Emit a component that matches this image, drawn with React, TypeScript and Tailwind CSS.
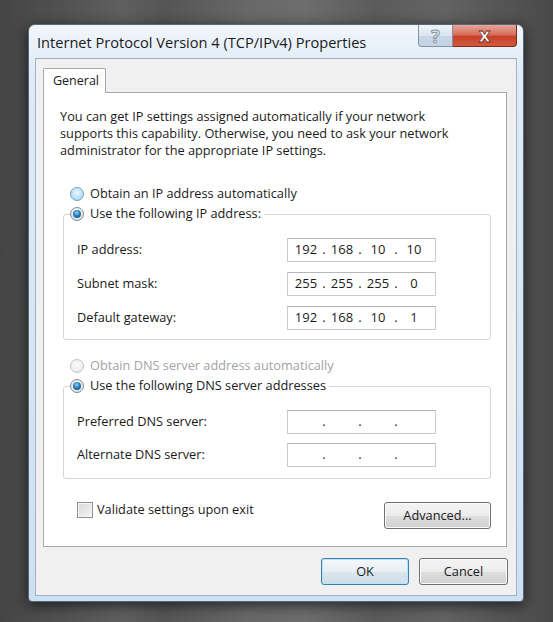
import React from "react";

const FONT = { fontFamily: '"Open Sans", "Noto Sans", "Liberation Sans", sans-serif' };

function Radio({ kind }: { kind: "off" | "on" | "disabled" }) {
  if (kind === "on") {
    return (
      <span className="w-[14px] h-[14px] rounded-full border border-[#7f8a94] bg-[radial-gradient(circle_at_50%_40%,#ffffff,#d9dde1)] flex items-center justify-center shrink-0">
        <span className="w-[8px] h-[8px] rounded-full bg-[radial-gradient(circle_at_45%_35%,#8fd3f5_0%,#2a7fb8_45%,#0d3f6b_100%)]" />
      </span>
    );
  }
  if (kind === "disabled") {
    return (
      <span className="w-[14px] h-[14px] rounded-full border border-[#c4c4c4] bg-[radial-gradient(circle_at_50%_40%,#fbfbfb,#e6e6e6)] shrink-0" />
    );
  }
  return (
    <span className="w-[14px] h-[14px] rounded-full border border-[#7e9bb3] bg-[radial-gradient(circle_at_50%_40%,#e9f6fd_0%,#b7e0f6_60%,#9fd2ef_100%)] shrink-0" />
  );
}

function IpBox({ parts }: { parts: string[] }) {
  return (
    <div className="w-[149px] h-[24px] border border-[#c9cbd0] border-t-[#b4b7bd] bg-white flex items-center pl-[3px] text-[13px] text-[#1a1a1a]">
      {parts.map((p, i) => (
        <React.Fragment key={i}>
          <span className="w-[30px] text-center">{p}</span>
          {i < 3 && <span className="w-[6px] text-center">.</span>}
        </React.Fragment>
      ))}
    </div>
  );
}

function Row({ label, parts }: { label: string; parts: string[] }) {
  return (
    <div className="flex items-center h-[24px]">
      <span className="w-[210px] text-[12.75px] text-[#1a1a1a]">{label}</span>
      <IpBox parts={parts} />
    </div>
  );
}

const btn =
  "h-[27px] rounded-[3px] border border-[#707070] bg-[linear-gradient(to_bottom,#f4f4f4_0%,#ececec_50%,#dedede_51%,#d0d0d0_100%)] shadow-[inset_0_0_0_1px_#fcfcfc] text-[12.75px] text-[#1a1a1a] flex items-center justify-center";

export default function App() {
  return (
    <div
      className="w-[553px] h-[622px] overflow-hidden pl-[28px] pt-[24px] bg-[linear-gradient(to_right,#444444_0%,#525252_12%,#5f5f5f_22%,#555555_30%,#686868_45%,#6d6d6d_55%,#5b5b5b_68%,#636363_80%,#494949_100%)]"
      style={FONT}
    >
      <div className="w-[496px] h-[578px] rounded-t-[7px] rounded-b-[4px] border border-[#55677a] bg-[linear-gradient(to_bottom,#f1f6fb_0%,#e0ebf6_8%,#d6e5f4_60%,#cde0f2_100%)] shadow-[0_3px_14px_rgba(0,0,0,0.65)] flex flex-col px-[6px] pb-[5px]">
        <div className="h-[33px] flex items-start justify-between">
          <span className="pt-[7px] pl-[2px] text-[14.6px] leading-[20px] text-[#1a1a1a]">
            Internet Protocol Version 4 (TCP/IPv4) Properties
          </span>
          <div className="flex h-[22px]">
            <div className="w-[35px] h-full rounded-bl-[4px] border border-t-0 border-[#7f93a8] bg-[linear-gradient(to_bottom,#eef3f8_0%,#dbe5ef_50%,#c8d6e4_51%,#c4d4e4_100%)] flex items-center justify-center">
              <span className="text-[18px] font-bold leading-none text-[#e8eef4] [-webkit-text-stroke:1px_#8492a0]">?</span>
            </div>
            <div className="w-[64px] h-full rounded-br-[4px] border border-l-0 border-t-0 border-[#7a2a1e] bg-[linear-gradient(to_bottom,#e7a597_0%,#d9705e_45%,#c7412b_55%,#d25a3c_100%)] flex items-center justify-center">
              <span className="text-[16px] font-extrabold leading-none text-white [-webkit-text-stroke:0.8px_#7a2a1e]">X</span>
            </div>
          </div>
        </div>

        <div className="flex-1 bg-[#f0f0f0] border border-[#9fb3c8] flex flex-col pl-[7px] pr-[8px] pt-[9px]">
          <div className="flex">
            <div className="w-[63px] h-[25px] bg-white border border-b-0 border-[#a7a7a7] rounded-t-[2px] -mb-[1px] relative z-10 flex items-center pl-[9px] text-[12.5px] text-[#1a1a1a]">
              General
            </div>
          </div>
          <div className="w-[464px] h-[455px] bg-white border border-[#a7a7a7] flex flex-col pt-[15px] pl-[16px]">
            <div className="text-[12.75px] leading-[17px] text-[#1a1a1a]">
              <div>You can get IP settings assigned automatically if your network</div>
              <div>supports this capability. Otherwise, you need to ask your network</div>
              <div>administrator for the appropriate IP settings.</div>
            </div>

            <div className="mt-[25px] h-[20px] flex items-center gap-[6px] pl-[10px]">
              <Radio kind="off" />
              <span className="text-[12.75px] text-[#1a1a1a]">Obtain an IP address automatically</span>
            </div>

            <fieldset className="ml-[3px] w-[428px] border border-[#d5d5d5] rounded-[3px] pb-[9px]">
              <legend className="ml-[6px] pr-[3px] h-[20px] flex items-center gap-[6px]">
                <Radio kind="on" />
                <span className="text-[12.75px] text-[#1a1a1a]">Use the following IP address:</span>
              </legend>
              <div className="pl-[13px] pt-[14px] flex flex-col gap-[10px]">
                <Row label="IP address:" parts={["192", "168", "10", "10"]} />
                <Row label="Subnet mask:" parts={["255", "255", "255", "0"]} />
                <Row label="Default gateway:" parts={["192", "168", "10", "1"]} />
              </div>
            </fieldset>

            <div className="mt-[16px] h-[20px] flex items-center gap-[6px] pl-[10px]">
              <Radio kind="disabled" />
              <span className="text-[12.75px] text-[#a3a3a3]">Obtain DNS server address automatically</span>
            </div>

            <fieldset className="ml-[3px] w-[428px] border border-[#d5d5d5] rounded-[3px] pb-[11px]">
              <legend className="ml-[6px] pr-[3px] h-[20px] flex items-center gap-[6px]">
                <Radio kind="on" />
                <span className="text-[12.75px] text-[#1a1a1a]">Use the following DNS server addresses</span>
              </legend>
              <div className="pl-[13px] pt-[14px] flex flex-col gap-[9px]">
                <Row label="Preferred DNS server:" parts={["", "", "", ""]} />
                <Row label="Alternate DNS server:" parts={["", "", "", ""]} />
              </div>
            </fieldset>

            <div className="mt-[23px] w-[431px] flex items-start justify-between">
              <div className="flex items-center gap-[4px] pl-[17px] h-[16px]">
                <span className="w-[16px] h-[16px] border border-[#8f8f8f] bg-[linear-gradient(135deg,#d8d8d8,#f4f4f4)] shadow-[inset_0_0_0_1px_#f6f6f6]" />
                <span className="text-[12.75px] text-[#1a1a1a]">Validate settings upon exit</span>
              </div>
              <div className={btn + " w-[107px]"}>Advanced...</div>
            </div>
          </div>

          <div className="mt-[11px] flex justify-end gap-[10px]">
            <div className="w-[88px] h-[27px] rounded-[3px] border border-[#3c7fb1] bg-[linear-gradient(to_bottom,#f3f8fb_0%,#e7eff5_50%,#dae6ee_51%,#d0dee8_100%)] shadow-[inset_0_0_0_1px_#b9e3f9] text-[12.75px] text-[#1a1a1a] flex items-center justify-center">
              OK
            </div>
            <div className={btn + " w-[89px]"}>Cancel</div>
          </div>
        </div>
      </div>
    </div>
  );
}
